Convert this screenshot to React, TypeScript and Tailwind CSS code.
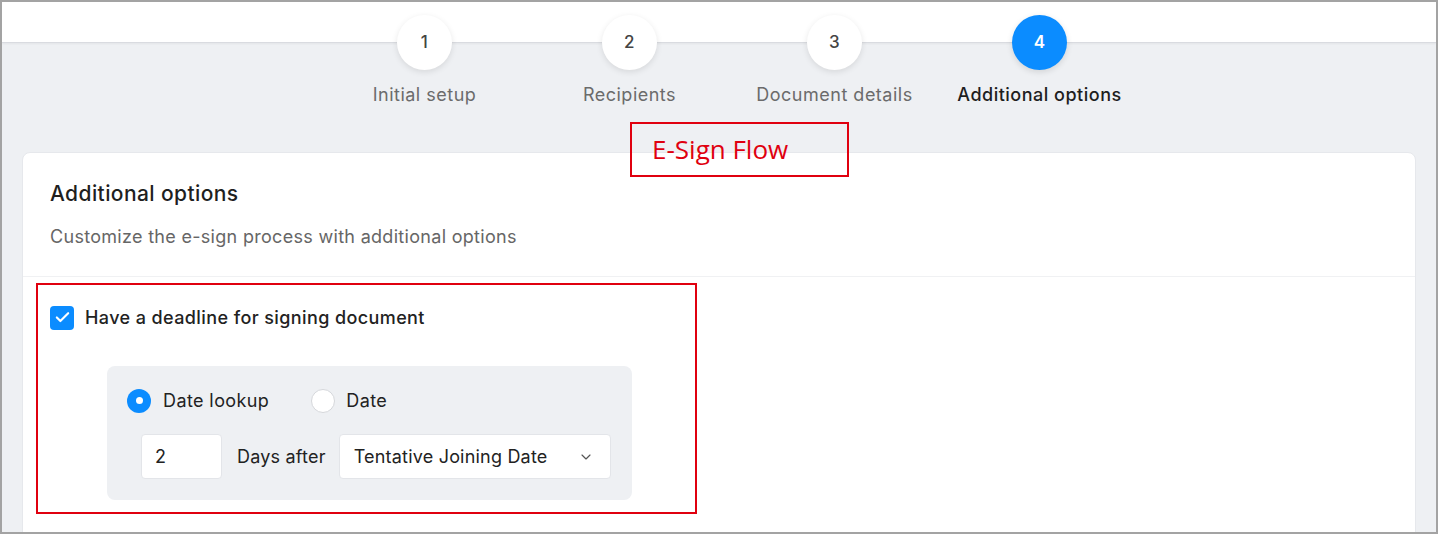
import { Check, ChevronDown } from "lucide-react";

const steps = [
  { n: 1, label: "Initial setup" },
  { n: 2, label: "Recipients" },
  { n: 3, label: "Document details" },
  { n: 4, label: "Additional options", active: true },
];

export default function App() {
  return (
    <div
      className="relative h-[534px] w-[1438px] overflow-hidden border-2 border-[#a3a3a3] bg-[#eef0f3] tracking-[0.4px]"
      style={{ fontFamily: "Inter, 'Noto Sans', sans-serif" }}
    >
      {/* Header strip */}
      <div className="h-[41px] border-b border-[#d9dbe0] bg-white shadow-[0_1px_2px_rgba(0,0,0,0.05)]" />

      {/* Stepper */}
      <div className="-mt-[28px] flex pl-[320px]">
        {steps.map((s) => (
          <div key={s.n} className="flex w-[205px] flex-col items-center">
            <div
              className={
                s.active
                  ? "flex h-[55px] w-[55px] items-center justify-center rounded-full bg-[#0b8cff] text-[17px] font-semibold text-white shadow-[0_2px_6px_rgba(0,0,0,0.12)]"
                  : "flex h-[55px] w-[55px] items-center justify-center rounded-full bg-white text-[17px] font-medium text-[#444] shadow-[0_2px_6px_rgba(0,0,0,0.1)]"
              }
            >
              {s.n}
            </div>
            <div
              className={
                s.active
                  ? "mt-[13px] text-[18px] leading-6 font-medium tracking-[0.5px] text-[#1e1e1e]"
                  : "mt-[13px] text-[18px] leading-6 tracking-[0.5px] text-[#6b6b6b]"
              }
            >
              {s.label}
            </div>
          </div>
        ))}
      </div>

      {/* Card */}
      <div className="mx-[20px] mt-[45px] h-[400px] rounded-lg border border-[#e6e8ec] bg-white">
        <div className="border-b border-[#f0f1f3] px-[27px] pt-[27px] pb-[27px]">
          <div className="text-[21px] leading-7 font-medium text-[#1f1f1f]">
            Additional options
          </div>
          <div className="mt-[17px] text-[18px] leading-6 tracking-[0.3px] text-[#666]">
            Customize the e-sign process with additional options
          </div>
        </div>

        <div className="pt-[6px] pl-[13px]">
          <div className="h-[231px] w-[661px] border-2 border-[#e0000f] pt-[19px] pl-[12px]">
            <div className="flex items-center gap-[11px]">
              <div className="flex h-[24px] w-[24px] items-center justify-center rounded-[4px] bg-[#0b8cff]">
                <Check className="h-[17px] w-[17px] text-white" strokeWidth={3} />
              </div>
              <span className="text-[18px] font-medium text-[#222]">
                Have a deadline for signing document
              </span>
            </div>

            <div className="mt-[35px] ml-[57px] w-[525px] rounded-lg bg-[#eef0f3] pt-[21px] pb-[21px] pl-[20px]">
              <div className="flex items-center">
                <div className="flex h-[24px] w-[24px] items-center justify-center rounded-full bg-[#0b8cff]">
                  <div className="h-[7px] w-[7px] rounded-full bg-white" />
                </div>
                <span className="ml-[12px] text-[18px] text-[#222]">Date lookup</span>
                <div className="ml-[42px] h-[24px] w-[24px] rounded-full border border-[#d5d7db] bg-white" />
                <span className="ml-[11px] text-[18px] text-[#222]">Date</span>
              </div>
              <div className="mt-[20px] ml-[14px] flex items-center">
                <div className="flex h-[45px] w-[81px] items-center rounded border border-[#e3e5e9] bg-white pl-[13px] text-[18px] text-[#222]">
                  2
                </div>
                <span className="ml-[15px] text-[18px] tracking-[0.2px] text-[#222]">Days after</span>
                <div className="ml-[13px] flex h-[45px] w-[272px] items-center justify-between rounded border border-[#e3e5e9] bg-white pr-[16px] pl-[14px] text-[18px] tracking-[0.2px] text-[#222]">
                  <span>Tentative Joining Date</span>
                  <ChevronDown className="h-[16px] w-[16px] text-[#555]" strokeWidth={1.75} />
                </div>
              </div>
            </div>
          </div>
        </div>
      </div>

      {/* Annotation label */}
      <div
        className="absolute top-[120px] left-[628px] flex h-[55px] w-[219px] items-center border-2 border-[#e0000f] pl-[20px] text-[26px] tracking-normal text-[#e0000f]"
        style={{ fontFamily: "'Open Sans', sans-serif" }}
      >
        E-Sign Flow
      </div>
    </div>
  );
}
